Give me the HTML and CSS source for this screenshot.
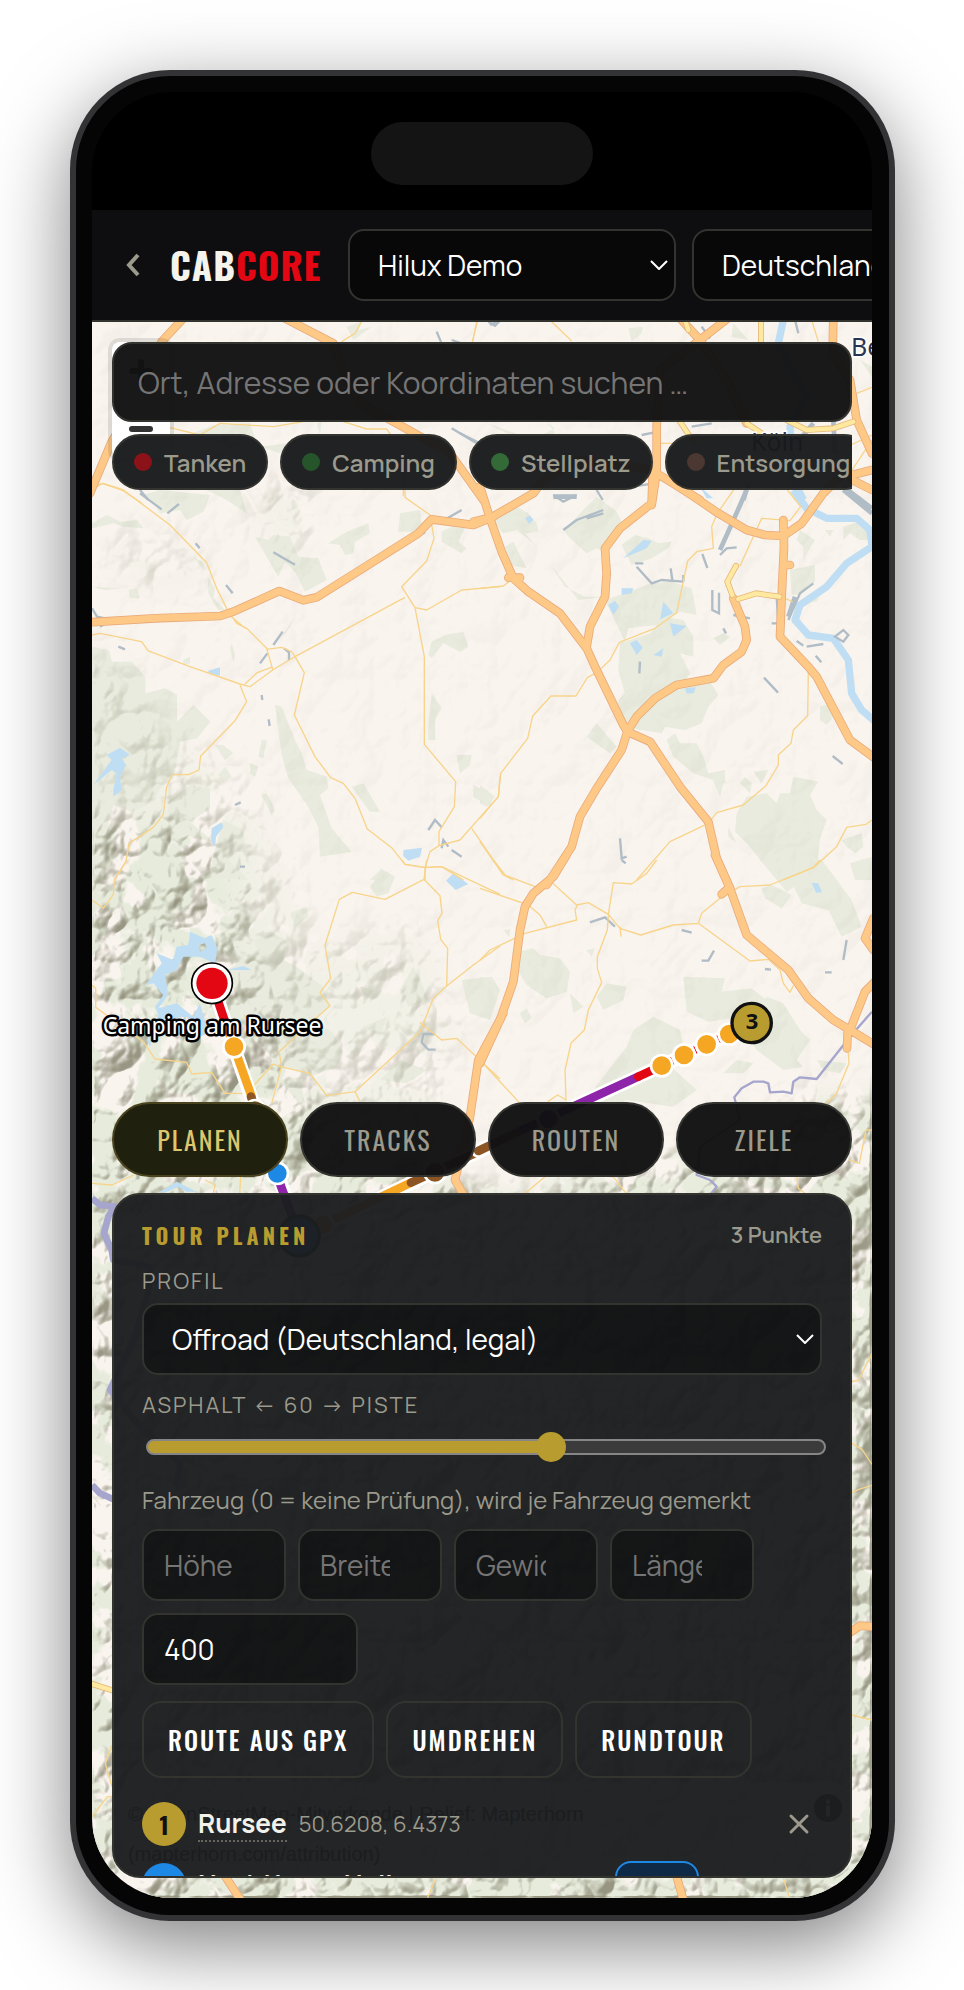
FILE: index.html
```html
<!DOCTYPE html>
<html lang="de">
<head>
<meta charset="utf-8">
<meta name="viewport" content="width=device-width, initial-scale=1">
<title>CabCore – Tour planen</title>
<link rel="stylesheet" href="styles.css">
</head>
<body>
<div class="phone">
<div class="screen">
  <div class="status"><div class="island"></div></div>
  <header class="topbar">
    <button class="back" type="button" aria-label="Zurück">
      <svg width="14" height="24" viewBox="0 0 14 24" fill="none" stroke="currentColor" stroke-width="4"><path d="M12 2 3 12l9 10"/></svg>
    </button>
    <a class="logo" href="#">CAB<span>CORE</span></a>
    <span class="pick pick-vehicle"><select class="field" aria-label="Fahrzeug"><option>Hilux Demo</option></select><svg class="caret" viewBox="0 0 18 10"><path d="m1 1 8 8 8-8"/></svg></span>
    <span class="pick pick-country"><select class="field" aria-label="Land"><option>Deutschland</option></select></span>
  </header>
  <main class="stage">
    <svg class="map" viewBox="92 322 780 1576" preserveAspectRatio="xMidYMid slice" role="img" aria-label="Karte">
      <defs>
        <filter id="relief" x="0" y="0" width="100%" height="100%" color-interpolation-filters="sRGB">
          <feTurbulence type="turbulence" baseFrequency=".016 .014" numOctaves="4" seed="11"/>
          <feGaussianBlur stdDeviation="1"/>
          <feDiffuseLighting surfaceScale="18" diffuseConstant="1.1" lighting-color="#fff"><feDistantLight azimuth="225" elevation="52"/></feDiffuseLighting>
          <feColorMatrix values="0 0 0 0 .55  0 0 0 0 .54  0 0 0 0 .46  -1.1 0 0 0 .88"/>
        </filter>
        <filter id="wood" x="0" y="0" width="100%" height="100%" color-interpolation-filters="sRGB">
          <feTurbulence type="fractalNoise" baseFrequency=".022" numOctaves="5" seed="4"/>
          <feColorMatrix values="0 0 0 0 .9  0 0 0 0 .92  0 0 0 0 .86  16 0 0 0 -6.9"/>
        </filter>
        <filter id="soft" x="-30%" y="-30%" width="160%" height="160%"><feGaussianBlur stdDeviation="16"/></filter>
        <mask id="hills" maskUnits="userSpaceOnUse" x="92" y="322" width="780" height="1576">
          <g fill="#fff" filter="url(#soft)">
            <path d="M50 820l90 0 40-10 50 50 20 100 40 60 20 90 100 60 100 30 110-40 120 0 60-60h90v850H50z"/>
            <path fill-opacity=".35" d="M50 640l60 20 60 80 80 60 60 150 100-20 40 80-20 150-200 40zM250 490l60-10 0 70-40-10zM110 540l60 0 40 40-80 0z"/>
          </g>
        </mask>
        <mask id="faint" maskUnits="userSpaceOnUse" x="92" y="322" width="780" height="1576">
          <path fill="#fff" fill-opacity=".05" d="M92 322h780v1576H92z"/>
        </mask>
      </defs>
      <path fill="#f9f4ee" d="M92 322h780v1576H92z"/>
      <g mask="url(#hills)"><path filter="url(#wood)" d="M92 322h780v1576H92z"/></g>

      <g class="green">
        <g transform="translate(60 60) scale(.33333)"><path d="M860 800l45-15-10 25 40-10-55 40zM400 1120l60-25 110-5 20 60-90 20-60 60zM600 1160l80-10-20 30zM770 1090l15-5-5 40z"/></g>
        <g transform="translate(460 60) scale(.33333)"><path d="M505 805l45-5-5 20-30 25zM820 790l45 50-50-10zM80 1090l120 60 85-45-20-15 20 30-60 20zM1200 900l36 20v30z"/></g>
        <g transform="translate(80 480) scale(.33333)">
          <path d="M36 130l45-25 40 20 50-5 20 25-60-5-30-10-65 15zM190 45l50-15 150 15-20 50-50 25-20-30-60 10-15-25zM380 30l100 0 20 70-60-40zM525 170l40 10 15-15 50 5 25 60 60 5 25 65-65 35-30-60-30-30-20 45zM745 190l55-35 65-25 5 30-45 25-5 35-25 5-15-30zM960 100l60-10 5 40-15 25-55 0zM1085 155l30-15 40 5-20 40 25 20-15 15-60-35zM340 230l35 20-5 20zM385 295l20 30-5 30 35 35-20 0-30-50zM650 405l-30 50-20 20zM455 490l10 35-5 20-10-40zM1055 485l40-20 55-10 15 45-25 15-50-25-35 45-10-10z"/>
          <path d="M36 500l50 10 10 35 60 0 40 45 0 50 60-15 35 20 0 80 50-50 50 50-40 50-50 10-20 110-40 30-20 40-60 30-60-20-30 100 10 125-80 0z"/>
          <path d="M270 960l60-45 60 10 0 60-60 40 70 60-90-20-50-50zM410 1090l20-70 60 30 5 50-50 40 60 60-120-10zM585 675l20 5 40 100 20 40 15 50 60 20 5 35-25 20 35 100 60 70-95 15-5-90-30-60-60-85-20-70zM310 540l20-10 0 20-20 5zM405 795l25 0 30 25-25 20zM415 885l20-25 20 30-25 20zM545 780l15 0-10 55-15-5zM510 850l25 10-10 30-15-10zM815 920l35-10 50 85-30 0zM1045 740l10-100 30 45-20 35 0 60-20 0zM1130 825l45 0-5 30-30 25zM1180 915l60 30-10 35-50-30zM560 940l25 50-10 15-30-60zM870 1200l35-35 30 35zM36 320l90 5-50 5zM145 330l25-5 10 30-30 0z"/>
        </g>
        <g transform="translate(480 480) scale(.33333)">
          <path d="M45 110l50-40 50 30 25 30 5 25-40 5 25 30-50-40-40 10-25-30zM80 240l-5-40 25-15 40 80-50-10zM250 150l40-40 60-60 60 45 20 40-60 80-20-10-30 15-50-45zM425 195l40-30 40 10 30 15 40-5-10 20-50 30-60 20zM215 260l40 60 60 30 60 0-80 10-70-90zM375 360l60-20 80-30 60-5 60 20 15 80-50-10-70 40-85 10-10 40zM1090 140l60-20 20 60-30 0-30-20-20 20zM960 150l45 30-35 60 0-40-20-20zM930 270l75-15 0 50-50 40-20 0zM1035 150l25 0-10 20zM975 370l45-20-10 15z"/>
          <path d="M420 490l90-30 40-50 60 10 30 50 0 60-40-10 30 60-30 45 90-20 25 40-30 35-20 50-50 20-60-10-10 20-60-10-50-10-20-60 0-20 20-20-20-70zM700 475l30-15 20 10-30 25zM320 770l30-40 60 70-20 20zM560 780l25-20 15 30 50 0 20 40 15 50 50-10 0 40 40-10-45 10-10 40-20-50-60-20-60-50zM780 910l15-20 20 20-5 30zM820 875l45-5-20 40zM770 1000l30-50 60-10 30 30 10-30 30 0 10-50 75 15-25 40 20 45 30 30-20 55-10 100-90 60-50-60-25-30-40-50-40-40zM1020 680l30-10 10 40-20 25-20-15zM745 1040l25 50-25-20zM1085 1080l60-20 5 40-25 20-25-20zM1110 1150l66-20v70h-50zM0 915l45 35-25 30-20-10z"/>
        </g>
        <g transform="translate(80 860) scale(.33333)"><path d="M870 80l40-50 35 20-20 50-35 10zM520 240l60-20 40 20-10 60-50 15-20-30zM630 160l50-20 5 30-40 30zM440 330l110-60 100 50 80 60 20 60-50 40 60 40 30 60-20 40-80 30-100-40-90-110zM960 390l40-70 25 50 20 50-60 20zM1145 360l90-10 25 40-30 90-60-20zM850 500l70-30-20 60zM840 380l45 10-30 20zM680 760l-80-100 60-10zM900 660l60-60 80 30-60 40z"/></g>
        <g transform="translate(480 860) scale(.33333)"><path d="M115 275l45-10 20 20 60 10 30 40-10 60-60 20-60-40-30-50zM0 350l45 15-25 50-20 10zM350 410l30-40 60 10-10 40-60 30zM270 400l40 40-30 20zM610 350l125 5-10 40 90-10 50 40-50 80-60-30-70 10-65-30zM860 410l50 20 50 80 30 30-40 60 20 20-60 10-80-60-40-60zM440 560l20-50 60-40 80 40 10 50-60 40 100 90-70 50-140-20-60 30-80-10zM120 460l20-15 15 30-20 15zM320 270l25-5-10 25zM70 210l20-3-2 25zM905 0h120l30 40 60 80 30 80-60 30-40-80-80-20zM845 85l30-10 60 30-30 40-50-30zM1010 600l90 10-20 30-50-10zM770 600l50 10-30 30-60 0z"/></g>
      </g>
      <g mask="url(#hills)"><path filter="url(#relief)" d="M92 322h780v1576H92z"/></g>
      <g mask="url(#faint)"><path filter="url(#relief)" d="M92 322h780v1576H92z"/></g>
      <g class="water">
        <g transform="translate(80 480) scale(.33333)"><path d="M40 915l55-75-15-15 40-22 30 22-25 10 13 20-18 35 5 40-25 20v-20l10-50-15-10zM395 1045l30-18 5 13-22 30-3 30-12-20zM385 572l35-10v25l-35-7zM970 1110l56-7-6 27-35 12-15-14z"/></g>
        <g transform="translate(480 480) scale(.33333)"><path d="M430 235l60-55 25 2-15 23zM550 365l30 35-40 18zM570 430l50 8-40 32zM450 490l20-10 18 23-18 22zM425 325h35l-5 15-30 5zM385 375l20-13 12 18-17 25zM520 525l30-20-5 25zM615 625l33-3-8 18-20 0zM135 115l15-8 10 12-12 13zM660 20l40 35-20 0z"/></g>
        <g transform="translate(80 860) scale(.33333)"><path fill-rule="evenodd" d="M330 215l45 20 20-10 17 40-7 45-45-20-50 0-20 40-35 15 10 60-30 40 55-15 50 40 20-40 25 90-25 10-40-60-85 10-25 80-10-20 35-75-10-25 25-35-30-35-22 5 32-45 15-20-15-30 50 20 10-40 35-5zM355 255l20-5 5 15-20 10zM440 330l50-12 25 12zM1098 62l22-22 45 32-38 18zM240 995l50-30 60 30-30 0-25-15-40 18z"/></g>
        <g transform="translate(480 860) scale(.33333)"><path d="M995 68l20 2 11 27-18 1z"/></g>
      </g>

      <g class="river">
        <path transform="translate(460 60) scale(.33333)" d="M970 780l-15 70 45 90 40 70-50 90 10 160 30 60"/>
        <path transform="translate(480 480) scale(.33333)" d="M940 30l40 55 60 30h90l40 35 6 50-76 50-60 70-80 55-15 45 40 45 75 10 45 65 10 100 30 50 41 35"/>
      </g>
      <g class="rail">
        <g transform="translate(60 60) scale(.33333)"><path d="M1130 815l25 60M1175 840l30 10M1285 785l20 12 15-15M1175 1105l75 45M240 1290l25 30"/></g>
        <g transform="translate(460 60) scale(.33333)"><path d="M725 800l25 35M1005 780l10 40M90 795l20-10M545 1125l50-10M695 1100l60-10M0 1120l60 30M520 1280l60-10"/><path stroke-width="14" d="M905 780l0 60M1060 1090l-50 60M1120 1080l5 100M850 1320l15-50M280 1310l70 0M1150 1290l86 70"/></g>
        <g transform="translate(80 480) scale(.33333)"><path d="M180 40l65 48M262 100l35-28M347 190l12 15M438 315l20 25M580 217l65 37M580 495l28-40M540 550l22-30M612 505l15 12v24M985 185l50-28M1102 115l43-25M905 228l18-12M36 385l15 25 45 10M115 500l20 8M545 645l2 15M566 718l3 20M1045 1050l20-30 20 22M1085 1105l5-25 15 20M1115 1110l30 20M465 975l17-8M60 440l18-10"/></g>
        <g transform="translate(480 480) scale(.33333)"><path d="M220 45l30 20 40-20M250 150l40-30 80-30M320 115l50-15M350 30l18 30M465 250l25 0M470 260l45 50 30-10 65 5M572 265l5 35M610 285l0 20M667 222l15 42M697 330l0 60 20 10v-62M720 225l20-20 30-3M760 405l50 10M890 350l5 80M875 430h40M925 420l35-80 40-30M950 483l20 14M980 500l50-8M1007 527l17 20M852 593l42 45M1058 828l30 24M1065 470l25-20 15 15-15 20zM480 545l-2 35M420 1075l5 60 15-5M730 445l8 15"/><path stroke-width="14" d="M800 30l-35 80-45 100M1090 20l86 65M945 350l-20 60"/></g>
        <g transform="translate(480 860) scale(.33333)"><path d="M330 187l45-15 30 28M605 210l30 8M665 302h20l17-30M855 327l18 2M1035 337h20M1100 240l-10 60M425 0l12 10"/></g>
        <g transform="translate(80 860) scale(.33333)"><path d="M1065 522h-35l-5 25 20 22h22M480 20h15"/></g>
      </g>
      <g class="minor">
        <g transform="translate(60 60) scale(.33333)"><path d="M905 785l-20 35-40 25M1250 785l-12 60M330 1103l90 22 60-35 160 10 90-15M850 1085l70 22h60l50 70v130M96 1290l30-20 60 20 60 40"/></g>
        <g transform="translate(460 60) scale(.33333)"><path d="M52 785l-15 60M275 785l60 58M1055 780l20 65M1190 1000l46-18M600 1150l160 0M1140 1170l96-45M1236 1140l-60 90"/></g>
        <g transform="translate(80 480) scale(.33333)"><path d="M36 20l34-10 60 20 140 105 110 113 30 77 30 60 30 45 30 15 60 60 18 63M455 410l40 35M36 465l24-5 125 25 20 28 125 47 150 52 30 8 68-50 67-40 330-178M480 615l20 50-35 57-103 106-5 42-32 14h-48l-17 36-10 83-30 39-73 48-9 55-35 55M560 508l45-6 30 13 10 15 28 48-30 127 62 125 47 63 38 17 35 45 37 92 73 56 40 50 60 10 50-3 65 40M495 612l35-33 48-18M975 30v22l75 53 12 70-22 68-75 77 40 63 28 147v263l94 112-4 75-46 75v42l-27 18-15 48v40M1005 383l35 7 105-60 115-10M1077 1097l63-17 115-130 5-60M1175 1045l85 123"/></g>
        <g transform="translate(480 480) scale(.33333)"><path d="M0 1085l70 100 30 15M0 325l70-7 30-23M0 1015l55-65 7-70 81-105 15-67 55-60h75l34-55 28-15 40-38 28-53 107-42 65-47 33-155 27-28 50-10-5-65 17-40 52-75M470 1200l100-115 115-55 25-32 80-23 68-58 37-62v-30l38-35 7-40 43-43 2-137M780 258l65-143 85 7 32-42-40-50M910 1200l90-37 70-63 30-58 58-9 18-13M915 355l23 10"/></g>
        <g transform="translate(80 860) scale(.33333)"><path d="M140 0l-37 60-3 43-30 42-34-25M36 375l11 10v57l143 103 35 52 95 10 15 35 60-5 40 63h65l80-88 20 8 90 20 50 67 85-12 195-180 40-100 40-37 3-113-21-27-9-56 13-22-6-53-48-49-117 60-98-21-39 21-43 137 17 100-32 43 30 39-153 138 8 45-30 110M1020 487l65 53 45-5 130 122M965 0l10 13 60 9 50-2 175 83M1032 58l8-58M1100 378l80-63 80-57M825 695l15 30M36 970l60 5 65-30M375 960l30 15-5 25M482 950l-3 50"/></g>
        <g transform="translate(480 860) scale(.33333)"><path d="M40 0l35 45 90 35M0 85l145 50 35 30 20 35M215 67l75 68 35-7 60 35-3 47-30 80v35l13 43-40 82-12 60-40 40-18 80 3 90-25-15-30 20M0 300l30-30 105-50 155-40-5-30 7-15M385 163l15-95 55 4 45-32 30-40M385 163l35 42 62 20 98-30 75-5 10-30 55-45 60-35 90-5 130-53 20-22M420 200l3 30M655 190l155 113 55-5 35 32 10 40 20 27 10-20M0 600l120 130M1105 570l2 40-37 90-30 30M135 1000l60-50M400 950l38 50M950 950l5 35 20 15M1176 810h-18l-20 100-30-10"/></g>
        <g transform="translate(480 1180) scale(.33333)"><path d="M1116 605l20-5 40-80M1116 790l30 18 30 45M1116 938l20-10 40-12"/></g>
        <g transform="translate(60 1560) scale(.33333)"><path d="M156 555l-20 55 20 70M156 710h-14l-46 60M1128 955l-25 58"/></g>
        <g transform="translate(480 1560) scale(.33333)"><path d="M1116 465l60 15M910 955l18 58"/></g>
      </g>
      <g class="border">
        <path transform="translate(480 860) scale(.33333)" d="M1176 455l-66 75-100 127-50-5-20 13-5 35-25-5-40 2-5-27-15-5-30 0-35 20-22 27 17 68-120 80-10 85 40 15 20 20-17 22"/>
        <g class="border-thick" transform="translate(80 1180) scale(.33333)"><path d="M36 55l24 20 45 5-20 30-13 50 23 50 5 30 110 20-5 80-40 130-75 160 90 110 120 110-10 70M36 915l24 25 40 18"/></g>
      </g>
      <g id="motorways">
        <g class="casing">
          <path id="m1" transform="translate(60 60) scale(.33333)" d="M90 1300l65-155 60-100 90-200 65-70M665 770l155 80 30 90 50 90 110 60 160 90 100 140"/>
          <path id="m2" transform="translate(460 60) scale(.33333)" d="M660 775l60 65 90-70M720 840l-120 90-10 170v135l-15 100M720 840l80 120 60 130M590 1240l130 80M1120 770l-2 110 52 80 20 120 46 100M250 1260l100-60 230 30M1176 1245l60-15M1176 1260l60 30"/>
          <path id="m3" transform="translate(80 480) scale(.33333)" d="M30 427l195-12 195-7 40-13 138-62 72 28 40-9 305-192 40-42 125 17 60-25"/>
          <path id="m4" transform="translate(480 480) scale(.33333)" d="M-20 125l55-13 125-72 30-40M0 20l30 95 35 100 35 80 45 40 95 65 80 105 25 55 85 175 12 20-17 55-75 115-50 85-25 90-75 115M442 755l68 30 90 135 85 105 25 110 40 90M320 500l10-60 45-90 5-70-5-75 45-60 95-75 3-90M442 755l28-45 55-55 65-40 110-20 30-40 55-40 15-35-5-40-35-85M590 15l125 85 85 50 55 15 55 3 55-38 65-90 60-60M910 120l2 80-7 150-5 120 85 90 25 30 100 190 76 56M85 293h35M912 255h18"/>
          <path id="m5" transform="translate(80 860) scale(.33333)" d="M1270 460l-75 140-25 170-45 190 35 60"/>
          <path id="m6" transform="translate(480 860) scale(.33333)" d="M258-12l-38 62-60 50-25 40-15 70-20 155-40 115-60 130M705-15l45 100 50 140 125 105 60 85 75 65 50 30 70 42M1110 510l45-115 30-30M725 103l20-18M1103 515l-2 50M1180 175l-25 60 25 35"/>
          <path id="m7" transform="translate(480 1560) scale(.33333)" d="M1100 225l40-28 40 3M590 950l20 70"/>
          <path id="m8" transform="translate(60 1560) scale(.33333)" d="M490 940l55 85"/>
        </g>
        <g class="road"><use href="#m1"/><use href="#m2"/><use href="#m3"/><use href="#m4"/><use href="#m5"/><use href="#m6"/><use href="#m7"/><use href="#m8"/></g>
      </g>
      <g class="casing casing-y">
        <path id="y1" transform="translate(480 480) scale(.33333)" d="M757 345l-15-40 26-47M775 357l53-17 70 10"/>
        <path id="y2" transform="translate(460 60) scale(.33333)" d="M685 810l-10-30M903 785v75M660 1085l40 60M1180 1085l-60 20-80 5-60-30M860 1090l60 40"/>
        <path id="y3" transform="translate(60 1560) scale(.33333)" d="M80 367l80 25"/>
      </g>
      <g class="road road-y"><use href="#y1"/><use href="#y2"/><use href="#y3"/></g>

      <g class="place"><text x="851" y="356">Beuel</text><text x="751" y="451">Köln</text></g>

      <g class="route">
        <g transform="translate(80 860) scale(.33333)">
          <path class="route-case" d="M396 370l196 570 66 188 407-193 200-92"/>
          <path stroke="#e30613" d="M396 370l44 130"/><path stroke="#f5a623" d="M440 500l75 210"/><path stroke="#8d5524" d="M513 710l40 115"/><path stroke="#1e88e5" d="M553 825l39 115"/><path stroke="#8e24aa" d="M596 960l62 168"/>
          <path stroke="#f5a623" d="M658 1128l335-160"/><path stroke="#8d5524" d="M993 968l72-33 200-92"/>
          <circle cx="462" cy="560" r="32" fill="#f5a623"/><circle cx="525" cy="752" r="32" fill="#8d5524"/><circle cx="592" cy="940" r="32" fill="#1e88e5"/><circle cx="728" cy="1095" r="32" fill="#f5a623"/><circle cx="1065" cy="937" r="32" fill="#8d5524"/>
          <circle class="pin" cx="658" cy="1128" r="60" fill="#1e88e5"/>
          <circle class="start" cx="396" cy="370" r="61" fill="#fff"/><circle class="start-in" cx="396" cy="370" r="47" fill="#e30613"/>
        </g>
        <g transform="translate(480 860) scale(.33333)">
          <path class="route-case" d="M-5 873l550-256 203-95"/>
          <path stroke="#8d5524" d="M-5 873l135-65"/><path stroke="#8e24aa" d="M130 808l345-158"/><path stroke="#e30613" d="M475 650l60-28"/>
          <path class="seams" d="M545 617l203-95"/>
          <circle cx="205" cy="777" r="32" fill="#8e24aa"/><circle cx="545" cy="617" r="32" fill="#f5a623"/><circle cx="612" cy="585" r="32" fill="#f5a623"/><circle cx="680" cy="553" r="32" fill="#f5a623"/><circle cx="748" cy="522" r="32" fill="#f5a623"/>
          <circle class="pin" cx="815" cy="489" r="59" fill="#b89c30"/>
        </g>
      </g>
      <text class="pin-no" x="752" y="1029">3</text>
      <text class="poi" x="212" y="1034">Camping am Rursee</text>
    </svg>

    <div class="zoomctl">
      <button type="button" aria-label="Vergrößern"><svg width="24" height="24" viewBox="0 0 24 24"><path d="M3 12h18M12 3v18"/></svg></button>
      <button type="button" aria-label="Verkleinern"><svg width="24" height="24" viewBox="0 0 24 24"><path d="M3 12h18"/></svg></button>
    </div>
    <div class="attrib">
      <p>© OpenStreetMap-Mitwirkende | Relief: Mapterhorn<br>(mapterhorn.com/attribution)</p>
      <svg width="28" height="28" viewBox="0 0 28 28"><circle cx="14" cy="14" r="14"/><path d="M14 7v1M14 13v8" stroke="#fff" stroke-width="4" stroke-linecap="round"/></svg>
    </div>

    <div class="overlay">
      <input class="search" type="search" aria-label="Suche" placeholder="Ort, Adresse oder Koordinaten suchen …">
      <div class="chips">
        <button type="button" class="chip"><i class="dot dot-fuel"></i>Tanken</button>
        <button type="button" class="chip"><i class="dot dot-camp"></i>Camping</button>
        <button type="button" class="chip"><i class="dot dot-pitch"></i>Stellplatz</button>
        <button type="button" class="chip"><i class="dot dot-dump"></i>Entsorgung</button>
      </div>
      <nav class="tabs">
        <button type="button" class="tab tab-on">PLANEN</button>
        <button type="button" class="tab">TRACKS</button>
        <button type="button" class="tab">ROUTEN</button>
        <button type="button" class="tab">ZIELE</button>
      </nav>
      <section class="panel">
        <div class="panel-head"><h2>TOUR PLANEN</h2><span>3 Punkte</span></div>
        <label class="cap" for="profil">PROFIL</label>
        <span class="pick"><select class="field" id="profil"><option>Offroad (Deutschland, legal)</option></select><svg class="caret" viewBox="0 0 18 10"><path d="m1 1 8 8 8-8"/></svg></span>
        <label class="cap cap-range" for="mix">ASPHALT ← 60 → PISTE</label>
        <input class="range" id="mix" type="range" min="0" max="100" value="60">
        <p class="hint">Fahrzeug (0 = keine Prüfung), wird je Fahrzeug gemerkt</p>
        <div class="dims">
          <input class="field num" type="text" aria-label="Höhe" placeholder="Höhe">
          <input class="field num" type="text" aria-label="Breite" placeholder="Breite">
          <input class="field num" type="text" aria-label="Gewicht" placeholder="Gewicht">
          <input class="field num" type="text" aria-label="Länge" placeholder="Länge">
          <input class="field num num-wide" type="text" aria-label="Reichweite" value="400">
        </div>
        <div class="actions">
          <button type="button">ROUTE AUS GPX</button><button type="button">UMDREHEN</button><button type="button">RUNDTOUR</button>
        </div>
        <ol class="stops">
          <li><span class="no">1</span><a href="#">Rursee</a><span class="pos">50.6208, 6.4373</span>
            <button type="button" class="del" aria-label="Entfernen"><svg width="22" height="22" viewBox="0 0 22 22"><path d="m3 3 16 16M19 3 3 19"/></svg></button></li>
          <li><span class="no no-night">2</span><a href="#">Nachtlager Heller</a><button type="button" class="night" aria-label="Nachtlager"></button></li>
        </ol>
      </section>
    </div>
  </main>
</div>
</div>
</body>
</html>
```
FILE: styles.css
```css
* { box-sizing: border-box; }
body {
  margin: 0;
  height: 100vh;
  padding: 70px 69px 69px 70px;
  background: #fff;
  color: #f2f1ea;
  font-family: Manrope, Inter, sans-serif;
  overflow: hidden;
}
button, input, select { font-family: inherit; margin: 0; }
button { cursor: pointer; }

.phone {
  height: 100%;
  padding: 16px 17px 17px 16px;
  border: 6px solid #333335;
  border-radius: 100px;
  background: #050505;
  box-shadow: 0 24px 80px rgba(0, 0, 0, .5);
}
.screen {
  height: 100%;
  display: flex;
  flex-direction: column;
  border-radius: 80px;
  overflow: hidden;
  background: #000;
}
.status {
  flex: none;
  height: 118px;
  display: flex;
  justify-content: center;
  padding-top: 30px;
}
.island { width: 222px; height: 63px; border-radius: 32px; background: #141414; }

.topbar {
  flex: none;
  height: 112px;
  display: flex;
  align-items: center;
  padding-left: 34px;
  border-bottom: 2px solid #33332f;
  background: #0e0e10;
  overflow: hidden;
}
.back {
  flex: none;
  display: flex;
  padding: 0;
  margin-right: 30px;
  border: 0;
  background: none;
  color: #9b9a8c;
}
.logo {
  flex: none;
  width: 154px;
  margin-right: 24px;
  color: #f4f3ec;
  font: 700 37px/48px Oswald, "Liberation Sans Narrow", "Liberation Sans", sans-serif;
  letter-spacing: 1px;
  text-decoration: none;
}
.logo span { color: #e30613; }

.pick { position: relative; display: block; }
.pick-vehicle { flex: none; width: 328px; margin-right: 16px; }
.pick-country { flex: none; width: 328px; }
.field {
  display: block;
  width: 100%;
  height: 72px;
  padding: 0 28px;
  border: 2px solid #33332f;
  border-radius: 16px;
  background: rgba(0, 0, 0, .4);
  color: #fff;
  font-size: 28px;
  appearance: none;
  outline: 0;
}
.caret {
  position: absolute;
  right: 8px;
  top: 31px;
  width: 18px;
  height: 10px;
  fill: none;
  stroke: #fff;
  stroke-width: 2;
  pointer-events: none;
}

.stage { position: relative; flex: 1; min-height: 0; display: flex; }
.map { position: absolute; inset: 0; width: 100%; height: 100%; }
.green { fill: #e8ebdd; }
.water { fill: #bfdef3; }
.river { fill: none; stroke: #bfdef3; stroke-width: 22; stroke-linejoin: round; }
.rail { fill: none; stroke: #b0bcc6; stroke-width: 7; }
.minor { fill: none; stroke: #f8d48a; stroke-width: 4; stroke-linejoin: round; }
.border { fill: none; stroke: #a5a5cd; stroke-width: 7; stroke-linejoin: round; }
.border-thick { stroke-width: 20; }
.casing, .road { fill: none; stroke-linejoin: round; stroke-linecap: round; }
.casing { stroke: #e9aa7a; stroke-width: 26; }
.road { stroke: #fec986; stroke-width: 21; }
.casing-y { stroke: #e5b87a; stroke-width: 18; }
.road-y { stroke: #ffe9a0; stroke-width: 13; }
.place { fill: #2b3352; stroke: #fff; stroke-width: 3; paint-order: stroke; font: 25px "Noto Sans", sans-serif; }
.route { stroke-width: 26; fill: none; stroke-linecap: round; }
.route-case { stroke: #fff; stroke-width: 42; }
.route circle { stroke: #fff; stroke-width: 8; }
.route .pin { stroke: #111; stroke-width: 10; }
.route .start { stroke: #000; stroke-width: 5; }
.route .start-in { stroke: none; }
.route .seams { stroke: #e30613; stroke-width: 24; stroke-dasharray: 3 8; stroke-linecap: butt; }
.pin-no { fill: #111; text-anchor: middle; font: 700 22px "Noto Sans", sans-serif; }
.poi { fill: #fff; stroke: #000; stroke-width: 5; stroke-linejoin: round; paint-order: stroke; text-anchor: middle; font: 23px "Noto Sans", sans-serif; }

.zoomctl {
  position: absolute;
  left: 20px;
  top: 20px;
  width: 58px;
  border-radius: 8px;
  background: #fff;
  box-shadow: 0 0 0 4px rgba(0, 0, 0, .1);
}
.zoomctl button {
  display: flex;
  width: 58px;
  height: 58px;
  align-items: center;
  justify-content: center;
  padding: 0;
  border: 0;
  background: none;
}
.zoomctl path { stroke: #333; stroke-width: 6; stroke-linecap: round; }
.attrib {
  position: absolute;
  left: 20px;
  right: 20px;
  bottom: 20px;
  display: flex;
  justify-content: space-between;
  padding: 12px 10px 4px 16px;
  border-radius: 24px;
  background: rgba(255, 255, 255, .6);
  color: #000;
  font: 20px/40px "Liberation Sans", sans-serif;
}
.attrib p { margin: 0; }

.overlay {
  position: relative;
  flex: 1;
  min-width: 0;
  display: flex;
  flex-direction: column;
  padding: 20px;
}
.search {
  flex: none;
  width: 100%;
  height: 80px;
  padding: 0 24px;
  border: 2px solid #33332f;
  border-radius: 20px;
  background: rgba(18, 18, 19, .97);
  color: #fff;
  font-size: 30px;
  appearance: none;
  outline: 0;
}
.search::placeholder, .field::placeholder { color: #757575; opacity: 1; }
.chips { flex: none; display: flex; gap: 12px; margin: 12px 0 auto; overflow: hidden; }
.chip {
  flex: none;
  height: 56px;
  display: flex;
  align-items: center;
  gap: 12px;
  padding: 0 20px;
  border: 2px solid #33332f;
  border-radius: 28px;
  background: rgba(24, 25, 27, .96);
  color: #9b9a8c;
  font-size: 24px;
  font-weight: 600;
}
.dot { width: 18px; height: 18px; border-radius: 50%; }
.dot-fuel { background: #8c1219; }
.dot-camp { background: #27552b; }
.dot-pitch { background: #336a37; }
.dot-dump { background: #4c3832; }

.tabs { flex: none; display: grid; grid-template-columns: repeat(4, 1fr); gap: 12px; margin-bottom: 16px; }
.tab {
  height: 75px;
  padding: 0;
  border: 2px solid #33332f;
  border-radius: 38px;
  background: rgba(17, 17, 18, .97);
  color: #9b9a8c;
  font: 26px Oswald, "Liberation Sans Narrow", "Liberation Sans", sans-serif;
  letter-spacing: 2px;
}
.tab-on { border-color: #4a431f; background: #20200f; color: #dcc66e; }

.panel {
  flex: 0 1 685px;
  padding: 23px 28px 0;
  border: 2px solid #33332f;
  border-radius: 28px;
  background: rgba(28, 30, 32, .97);
  overflow: hidden;
}
.panel-head { display: flex; justify-content: space-between; align-items: center; height: 34px; }
.panel-head h2 {
  margin: 0;
  color: #b89c30;
  font: 700 22px/34px Oswald, "Liberation Sans Narrow", "Liberation Sans", sans-serif;
  letter-spacing: 4px;
}
.panel-head span { color: #9b9a8c; font-size: 22px; font-weight: 600; }
.cap {
  display: block;
  margin-top: 13px;
  height: 38px;
  color: #9b9a8c;
  font-size: 22px;
  line-height: 32px;
  letter-spacing: 2px;
}
.cap-range { margin-top: 14px; }
.range {
  display: block;
  width: 100%;
  height: 32px;
  margin: 4px 0 0 4px;
  background: none;
  appearance: none;
}
.range::-webkit-slider-runnable-track {
  height: 16px;
  border: 2px solid #868686;
  border-radius: 8px;
  background: linear-gradient(to right, #b89c30 60%, #3b3b3b 60%);
}
.range::-webkit-slider-thumb {
  width: 30px;
  height: 30px;
  margin-top: -9px;
  border-radius: 50%;
  background: #b89c30;
  appearance: none;
}
.hint { margin: 20px 0 12px; color: #9b9a8c; font-size: 24px; line-height: 34px; white-space: nowrap; }
.dims { display: flex; flex-wrap: wrap; gap: 12px; }
.num { width: 144px; padding: 0 50px 0 20px; }
.num-wide { width: 216px; }
.actions { display: flex; gap: 12px; margin: 16px 0 24px; }
.actions button {
  height: 77px;
  padding: 0 24px;
  border: 2px solid #33332f;
  border-radius: 20px;
  background: none;
  color: #fff;
  font: 500 25px Oswald, "Liberation Sans Narrow", "Liberation Sans", sans-serif;
  letter-spacing: 2px;
}
.stops { margin: 0; padding: 0; list-style: none; }
.stops li { display: flex; align-items: center; gap: 12px; height: 44px; margin-bottom: 17px; }
.no {
  width: 44px;
  height: 44px;
  border-radius: 50%;
  background: #b89c30;
  color: #111;
  font: 700 24px/44px Oswald, "Liberation Sans", sans-serif;
  text-align: center;
}
.no-night { background: #1e88e5; }
.stops a {
  border-bottom: 2px dotted #66655e;
  color: #f2f1ea;
  font-size: 26px;
  font-weight: 700;
  line-height: 34px;
  text-decoration: none;
}
.pos { color: #9b9a8c; font-size: 22px; }
.del { display: flex; margin-left: auto; padding: 0; margin-right: 12px; border: 0; background: none; }
.del path { stroke: #9b9a8c; stroke-width: 3; stroke-linecap: round; }
.night {
  width: 84px;
  height: 48px;
  margin-left: auto;
  margin-right: 123px;
  border: 2px solid #1e88e5;
  border-radius: 16px;
  background: #0f2a47;
}
```
